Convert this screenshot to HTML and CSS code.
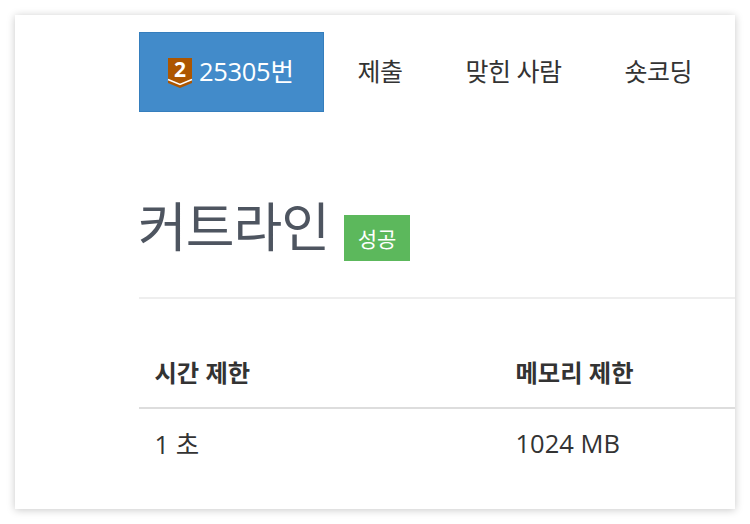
FILE: index.html
```html
<!DOCTYPE html>
<html lang="ko">
<head>
  <meta charset="UTF-8">
  <meta name="viewport" content="width=device-width, initial-scale=1.0">
  <title>커트라인</title>
  <link rel="stylesheet" href="styles.css">
</head>
<body>
  <div class="card">
    <div class="content">
      <ul class="tabs">
        <li class="tab active">
          <svg class="tier" width="24" height="30" viewBox="0 0 24 30">
            <path d="M0 0H24V25L12 30L0 25Z" fill="#ad5600"/>
            <path d="M0 21.5L12 26.5L24 21.5" fill="none" stroke="#fff" stroke-width="1.6"/>
            <text x="12" y="19" text-anchor="middle" class="tier-num">2</text>
          </svg>
          25305번
        </li>
        <li class="tab">제출</li>
        <li class="tab">맞힌 사람</li>
        <li class="tab">숏코딩</li>
      </ul>
      <div class="page-header">
        <h1>커트라인</h1>
        <span class="label">성공</span>
      </div>
      <table class="info">
        <thead>
          <tr><th class="col-time">시간 제한</th><th>메모리 제한</th></tr>
        </thead>
        <tbody>
          <tr><td>1 초</td><td>1024 MB</td></tr>
        </tbody>
      </table>
    </div>
  </div>
</body>
</html>
```

FILE: styles.css
```css
html, body {
  height: 100%;
}

body {
  margin: 0;
  padding: 15px;
  box-sizing: border-box;
  overflow: hidden;
  background: #fff;
  font-family: "Open Sans", "Noto Sans CJK KR", sans-serif;
  color: #333;
}

.card {
  width: 720px;
  height: 494px;
  background: #fff;
  box-shadow: 0 1px 8px rgba(0, 0, 0, 0.22);
  overflow: hidden;
}

.content {
  padding: 17px 0 0 124px;
}

.tabs {
  display: flex;
  list-style: none;
  margin: 0;
  padding: 0;
}

.tab {
  display: flex;
  align-items: center;
  height: 80px;
  padding: 0 31.5px 4px;
  box-sizing: border-box;
  font-size: 25px;
  letter-spacing: -0.5px;
  white-space: nowrap;
}

.tab.active {
  width: 185px;
  margin-right: 2px;
  padding: 0 0 6px 28px;
  border: 1px solid #357ebd;
  background: #428bca;
  color: #fff;
  font-size: 25.5px;
  letter-spacing: -0.3px;
}

.tier {
  margin-top: 8px;
  margin-right: 7px;
  overflow: visible;
}

.tier-num {
  font-family: "Open Sans", sans-serif;
  font-size: 21px;
  font-weight: 700;
  letter-spacing: 0;
  fill: #fff;
}

.page-header {
  display: flex;
  align-items: flex-end;
  height: 187px;
  box-sizing: border-box;
  padding-bottom: 37px;
  border-bottom: 2px solid #eee;
}

h1 {
  margin: 0 0 2px -1px;
  font-size: 53px;
  font-weight: 400;
  line-height: 62px;
  letter-spacing: -1px;
  color: #4e5560;
}

.label {
  display: flex;
  align-items: center;
  justify-content: center;
  width: 66px;
  height: 46px;
  margin-left: 15px;
  margin-bottom: -1px;
  background: #5cb85c;
  color: #fff;
  font-size: 21px;
}

.info {
  width: 100%;
  border-collapse: collapse;
  table-layout: fixed;
  font-size: 25.5px;
}

.info th,
.info td {
  box-sizing: border-box;
  padding: 0 0 0 15.5px;
  text-align: left;
}

.info th {
  height: 109px;
  padding-top: 36px;
  border-bottom: 2px solid #ddd;
  font-size: 24.3px;
  font-weight: 700;
}

.info td {
  height: 70px;
  padding-bottom: 2px;
}

.col-time {
  width: 361px;
}
```
